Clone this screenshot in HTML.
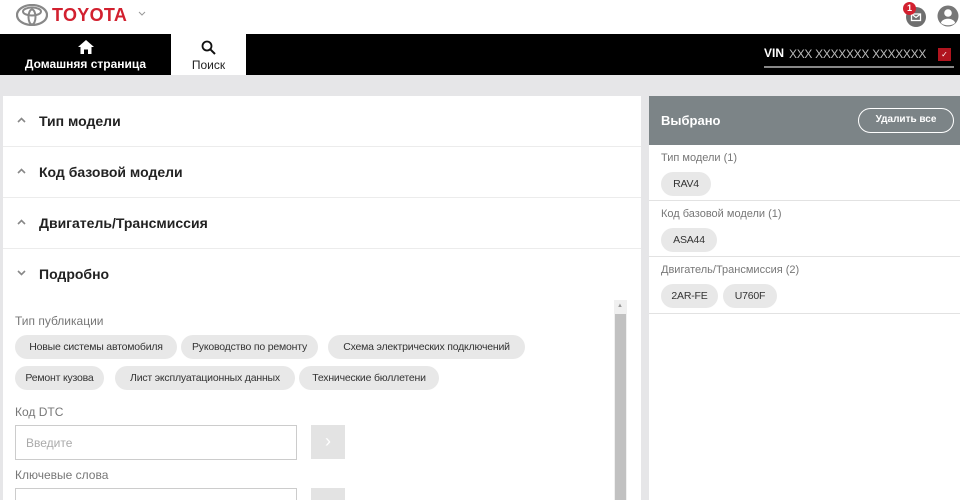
<!DOCTYPE html>
<html><head><meta charset="utf-8"><style>
*{box-sizing:border-box;margin:0;padding:0}
html,body{width:960px;height:500px;overflow:hidden}
body{background:#e6e6e8;font-family:"Liberation Sans",Arial,sans-serif;position:relative}
.abs{position:absolute}
.hdr{left:0;top:0;width:960px;height:34px;background:#fff}
.nav{left:0;top:34px;width:960px;height:41px;background:#000}
.tab1{left:0;top:34px;width:171px;height:41px;color:#fff;text-align:center;font-size:12px}
.tab2{left:171px;top:34px;width:75px;height:41px;background:#fff;color:#222;text-align:center;font-size:12px}
.left{left:3px;top:96px;width:638px;height:404px;background:#fff;overflow:hidden}
.right{left:649px;top:96px;width:311px;height:404px;background:#fff}
.row{position:absolute;left:0;width:638px;height:51px;border-bottom:1.5px solid #ececec;font-size:14px;font-weight:bold;color:#222}
.row span{position:absolute;left:36px;top:17px}
.row svg{position:absolute;left:14px;top:21px}
.chip{position:absolute;height:24px;border-radius:12px;background:#e8e8e8;font-size:10.5px;color:#333;line-height:24px;text-align:center;white-space:nowrap;letter-spacing:-0.2px}
.lbl{position:absolute;font-size:12px;color:#777}
.inp{position:absolute;width:282px;height:35px;border:1px solid #ccc;font-size:12px;color:#aaa;padding:10px 10px}
.btn{position:absolute;width:34px;height:34px;background:#e3e3e3;color:#fff;text-align:center;line-height:32px;font-size:18px}
.sec{position:absolute;left:0;width:311px;border-bottom:1px solid #e2e2e2}
.sec .lbl{left:12px;font-size:11px;color:#777}
</style></head><body>
<div class="abs hdr"></div>
<svg class="abs" style="left:16px;top:4px" width="32" height="22" viewBox="0 0 32 22"><ellipse cx="16" cy="11" rx="15" ry="10" fill="none" stroke="#888" stroke-width="2.2"/><ellipse cx="16" cy="7.5" rx="9" ry="4" fill="none" stroke="#888" stroke-width="2"/><ellipse cx="16" cy="13" rx="3.5" ry="7.5" fill="none" stroke="#888" stroke-width="2"/></svg>
<div class="abs" style="left:52px;top:5px;font-size:18px;font-weight:bold;color:#d2202f;letter-spacing:0.3px">TOYOTA</div>
<svg class="abs" style="left:138px;top:11px" width="8" height="5" viewBox="0 0 8 5"><path d="M1 1 L4 4 L7 1" fill="none" stroke="#999" stroke-width="1"/></svg>
<div class="abs" style="left:906px;top:7px;width:20px;height:20px;border-radius:50%;background:#6f6f6f"></div>
<svg class="abs" style="left:910px;top:11px" width="12" height="12" viewBox="0 0 12 12"><rect x="1.5" y="3" width="9" height="6.5" fill="none" stroke="#fff" stroke-width="1.3"/><path d="M1.5 3 L6 6.5 L10.5 3" fill="none" stroke="#fff" stroke-width="1.2"/></svg>
<div class="abs" style="left:903px;top:2px;width:13px;height:13px;border-radius:50%;background:#d2202f;color:#fff;font-size:9px;font-weight:bold;text-align:center;line-height:13px">1</div>
<svg class="abs" style="left:937px;top:5px" width="22" height="22" viewBox="0 0 22 22"><circle cx="11" cy="11" r="10.5" fill="#777"/><circle cx="11" cy="8" r="3.8" fill="#fff"/><path d="M4 17.5 C6 12.5 16 12.5 18 17.5 L18 18 C15 21 7 21 4 18Z" fill="#fff"/></svg>
<div class="abs nav"></div>
<div class="abs tab1"><svg style="margin-top:6px" width="16" height="14" viewBox="0 0 16 14"><path d="M8 0 L16 7 H13.5 V14 H10 V9.5 H6 V14 H2.5 V7 H0Z" fill="#fff"/></svg><div style="font-weight:bold;font-size:12px">Домашняя страница</div></div>
<div class="abs tab2"><svg style="margin-top:6px" width="16" height="15" viewBox="0 0 16 15"><circle cx="6" cy="6" r="4.5" fill="none" stroke="#111" stroke-width="1.8"/><path d="M9.3 9.3 L14 14" stroke="#111" stroke-width="2"/></svg><div style="font-size:12px">Поиск</div></div>
<div class="abs" style="left:764px;top:46px;font-size:12px;font-weight:bold;color:#fff">VIN</div>
<div class="abs" style="left:789px;top:47px;font-size:12px;color:#bbb;letter-spacing:-0.3px">XXX XXXXXXX XXXXXXX</div>
<div class="abs" style="left:764px;top:66px;width:190px;height:1.5px;background:#888"></div>
<div class="abs" style="left:938px;top:48px;width:13px;height:13px;background:#b0141e;color:#fff;font-size:8px;text-align:center;line-height:13px">&#10003;</div>

<div class="abs left">
<div class="row" style="top:0"><svg width="9" height="6" viewBox="0 0 9 6"><path d="M1 5 L4.5 1.5 L8 5" fill="none" stroke="#888" stroke-width="1.6"/></svg><span>Тип модели</span></div>
<div class="row" style="top:51px"><svg width="9" height="6" viewBox="0 0 9 6"><path d="M1 5 L4.5 1.5 L8 5" fill="none" stroke="#888" stroke-width="1.6"/></svg><span>Код базовой модели</span></div>
<div class="row" style="top:102px"><svg width="9" height="6" viewBox="0 0 9 6"><path d="M1 5 L4.5 1.5 L8 5" fill="none" stroke="#888" stroke-width="1.6"/></svg><span>Двигатель/Трансмиссия</span></div>
<div class="row" style="top:153px;border:none"><svg width="9" height="6" viewBox="0 0 9 6"><path d="M1 1 L4.5 4.5 L8 1" fill="none" stroke="#888" stroke-width="1.6"/></svg><span>Подробно</span></div>
<div class="lbl" style="left:12px;top:218px">Тип публикации</div>
<div class="chip" style="left:12px;top:239px;width:162px">Новые системы автомобиля</div>
<div class="chip" style="left:178px;top:239px;width:137px">Руководство по ремонту</div>
<div class="chip" style="left:325px;top:239px;width:197px">Схема электрических подключений</div>
<div class="chip" style="left:12px;top:270px;width:89px">Ремонт кузова</div>
<div class="chip" style="left:112px;top:270px;width:180px">Лист эксплуатационных данных</div>
<div class="chip" style="left:296px;top:270px;width:140px">Технические бюллетени</div>
<div class="lbl" style="left:12px;top:309px">Код DTC</div>
<div class="inp" style="left:12px;top:329px">Введите</div>
<div class="btn" style="left:308px;top:329px">&#8250;</div>
<div class="lbl" style="left:12px;top:372px">Ключевые слова</div>
<div class="inp" style="left:12px;top:392px"></div>
<div class="btn" style="left:308px;top:392px"></div>
<div class="abs" style="left:611px;top:204px;width:13px;height:200px;background:#f0f0f0"></div>
<div class="abs" style="left:614px;top:207px;font-size:6px;color:#999">&#9650;</div>
<div class="abs" style="left:612px;top:218px;width:11px;height:186px;background:#c1c1c1"></div>
</div>

<div class="abs right">
<div class="abs" style="left:0;top:0;width:311px;height:49px;background:#7c8487"></div>
<div class="abs" style="left:12px;top:17px;font-size:13px;font-weight:bold;color:#fff">Выбрано</div>
<div class="abs" style="left:209px;top:12px;width:96px;height:25px;border:1.5px solid #fff;border-radius:13px;color:#fff;font-size:10px;font-weight:bold;text-align:center;line-height:22px">Удалить все</div>
<div class="sec" style="top:49px;height:56px"><div class="lbl" style="top:7px">Тип модели (1)</div><div class="chip" style="left:12px;top:27px;width:50px">RAV4</div></div>
<div class="sec" style="top:105px;height:56px"><div class="lbl" style="top:7px">Код базовой модели (1)</div><div class="chip" style="left:12px;top:27px;width:56px">ASA44</div></div>
<div class="sec" style="top:161px;height:57px"><div class="lbl" style="top:7px">Двигатель/Трансмиссия (2)</div><div class="chip" style="left:12px;top:27px;width:57px">2AR-FE</div><div class="chip" style="left:74px;top:27px;width:54px">U760F</div></div>
</div>
</body></html>
